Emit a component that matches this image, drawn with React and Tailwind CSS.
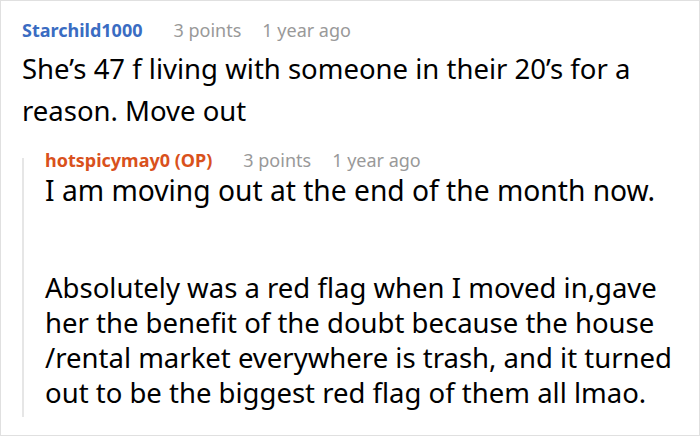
import React from 'react'

const font = { fontFamily: '"Noto Sans", "Open Sans", sans-serif' }

function Meta({ name, nameClass, points, time }) {
  return (
    <div className="flex items-baseline text-[18px] leading-[24px] whitespace-nowrap">
      <span className={'font-bold ' + nameClass}>{name}</span>
      <span className="ml-[31px] text-[#999999]">{points}</span>
      <span className="ml-[21px] text-[#999999]">{time}</span>
    </div>
  )
}

export default function App() {
  return (
    <div className="w-[700px] h-[436px] bg-white border border-[#e0e0e0] overflow-hidden text-black" style={font}>
      <div className="pl-[21px] pt-[17px]">
        <Meta name="Starchild1000" nameClass="text-[#3a6cc2]" points="3 points" time="1 year ago" />
        <p className="mt-[6px] text-[27.5px] leading-[42px] max-w-[670px]">
          She’s 47 f living with someone in their 20’s for a reason. Move out
        </p>
        <div className="flex mt-[16px]">
          <div className="w-[2px] bg-[#e6e6e6] mt-[10px] shrink-0" />
          <div className="pl-[21px] pb-[7px]">
            <Meta name="hotspicymay0 (OP)" nameClass="text-[#d9511c]" points="3 points" time="1 year ago" />
            <p className="text-[28.2px] leading-[36px] whitespace-nowrap">
              I am moving out at the end of the month now.
            </p>
            <p className="mt-[62px] text-[27.5px] leading-[35px] max-w-[648px]">
              Absolutely was a red flag when I moved in,gave her the benefit of the doubt because the house /rental market everywhere is trash, and it turned out to be the biggest red flag of them all lmao.
            </p>
          </div>
        </div>
      </div>
    </div>
  )
}
